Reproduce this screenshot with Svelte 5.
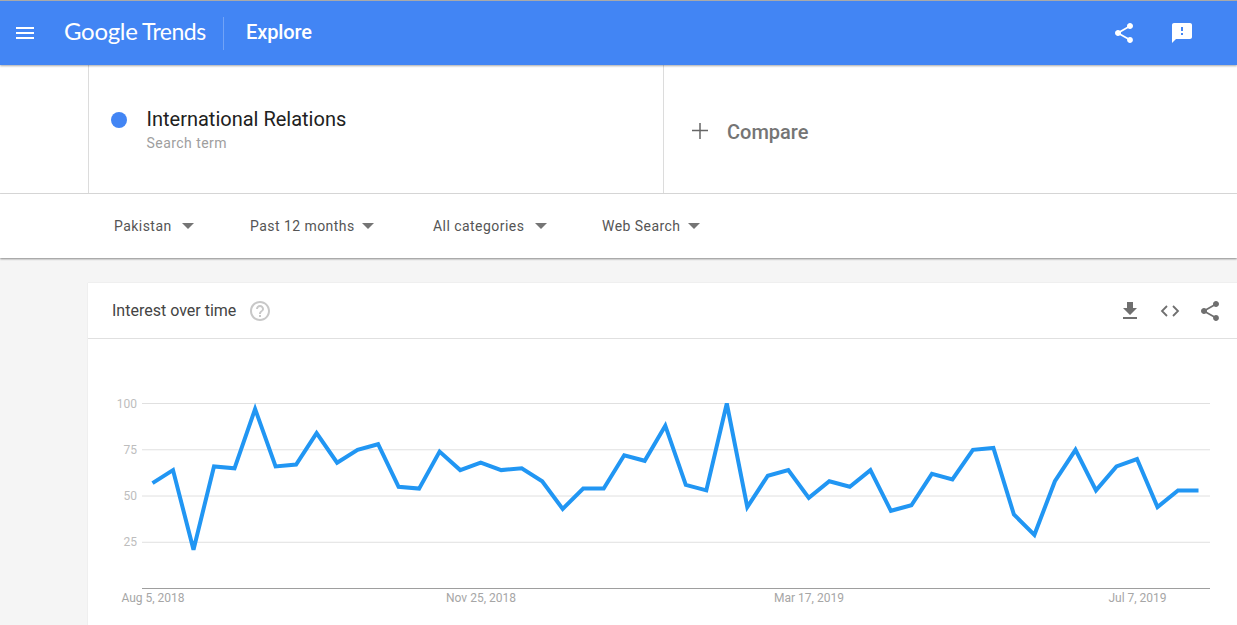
<script>
    const values = [57,64,21,66,65,97,66,67,84,68,75,78,55,54,74,64,68,64,65,58,43,54,54,72,69,88,56,53,100,44,61,64,49,58,55,64,42,45,62,59,75,76,40,29,58,75,53,66,70,44,53,53];
    const filters = [
        { label: "Pakistan", width: 136, gap: 10 },
        { label: "Past 12 months", width: 183, gap: 7 },
        { label: "All categories", width: 169, gap: 11 },
        { label: "Web Search", width: 110, gap: 8 }
    ];
    const ticks = [100, 75, 50, 25];
    const dates = [
        { label: "Aug 5, 2018", x: 65 },
        { label: "Nov 25, 2018", x: 393 },
        { label: "Mar 17, 2019", x: 721 },
        { label: "Jul 7, 2019", x: 1049.5 }
    ];
    const share = "M18 16.08c-.76 0-1.44.3-1.96.77L8.91 12.7c.05-.23.09-.46.09-.7s-.04-.47-.09-.7l7.05-4.11c.54.5 1.25.81 2.04.81 1.66 0 3-1.34 3-3s-1.34-3-3-3-3 1.34-3 3c0 .24.04.47.09.7L8.04 9.81C7.5 9.31 6.79 9 6 9c-1.66 0-3 1.34-3 3s1.34 3 3 3c.79 0 1.5-.31 2.04-.81l7.12 4.16c-.05.21-.08.43-.08.65 0 1.61 1.31 2.92 2.92 2.92 1.61 0 2.92-1.31 2.92-2.92s-1.31-2.92-2.92-2.92z";

    // chart coordinates are relative to the card's left edge and the top of the svg
    const xAt = (i) => 64.5 + i * 20.51;
    const yAt = (v) => 64.5 + (100 - v) * 1.85;
    const points = values.map((v, i) => `${xAt(i).toFixed(1)},${yAt(v).toFixed(1)}`).join(" ");
</script>

<div class="page">
    <header class="topbar">
        <svg class="menu" viewBox="0 0 24 24" width="24" height="24"><path d="M3 18h18v-2H3v2zm0-5h18v-2H3v2zm0-7v2h18V6H3z" /></svg>
        <div class="logo"><span class="google">Google</span> <span class="trends">Trends</span></div>
        <div class="explore">Explore</div>
        <div class="bar-actions">
            <svg viewBox="0 0 24 24" width="24" height="24"><path d={share} /></svg>
            <svg viewBox="0 0 24 24" width="24" height="24"><path d="M20 2H4c-1.1 0-1.99.9-1.99 2L2 22l4-4h14c1.1 0 2-.9 2-2V4c0-1.1-.9-2-2-2zm-7 12h-2v-2h2v2zm0-4h-2V6h2v4z" /></svg>
        </div>
    </header>

    <section class="terms">
        <div class="term">
            <span class="dot"></span>
            <div>
                <div class="term-name">International Relations</div>
                <div class="term-sub">Search term</div>
            </div>
        </div>
        <div class="compare">
            <svg viewBox="0 0 16 16" width="16" height="16"><path d="M0 7.5h16M8 0v16" /></svg>
            <span>Compare</span>
        </div>
    </section>

    <section class="filters">
        {#each filters as f}
            <div class="filter" style="width: {f.width}px; gap: {f.gap}px">
                <span>{f.label}</span>
                <i class="caret"></i>
            </div>
        {/each}
    </section>

    <main class="content">
        <div class="card">
            <div class="card-head">
                <span class="card-title">Interest over time</span>
                <svg class="help" viewBox="0 0 24 24" width="24" height="24"><path d="M11 18h2v-2h-2v2zm1-16C6.48 2 2 6.48 2 12s4.48 10 10 10 10-4.48 10-10S17.52 2 12 2zm0 18c-4.41 0-8-3.59-8-8s3.59-8 8-8 8 3.59 8 8-3.59 8-8 8zm0-14c-2.21 0-4 1.79-4 4h2c0-1.1.9-2 2-2s2 .9 2 2c0 2-3 1.75-3 5h2c0-2.25 3-2.5 3-5 0-2.21-1.79-4-4-4z" /></svg>
                <div class="card-actions">
                    <svg viewBox="0 0 24 24" width="24" height="24"><path d="M19 9h-4V3H9v6H5l7 7 7-7zM5 18v2h14v-2H5z" /></svg>
                    <svg viewBox="0 0 24 24" width="24" height="24"><path class="thin" d="M9 7l-5 5 5 5M15 7l5 5-5 5" /></svg>
                    <svg viewBox="0 0 24 24" width="24" height="24"><path d={share} /></svg>
                </div>
            </div>
            <svg class="chart" viewBox="0 0 1149 286" width="1149" height="286">
                {#each ticks as t}
                    <line class="grid" x1="54" x2="1122" y1={yAt(t)} y2={yAt(t)} />
                    <text class="tick" x="49" y={yAt(t) + 4} text-anchor="end">{t}</text>
                {/each}
                <line class="axis" x1="54" x2="1122" y1="249.5" y2="249.5" />
                {#each dates as d}
                    <text class="date" x={d.x} y="262.5" text-anchor="middle">{d.label}</text>
                {/each}
                <polyline class="series" {points} />
            </svg>
        </div>
    </main>
</div>

<style>
    :global(body) {
        margin: 0;
        overflow: hidden;
    }
    .page {
        height: 625px;
        display: flex;
        flex-direction: column;
        font-family: Roboto, "Liberation Sans", sans-serif;
        background: #f5f5f5;
        overflow: hidden;
    }
    .topbar {
        height: 64px;
        flex: none;
        border-top: 1px solid #a9a9a9;
        display: flex;
        align-items: center;
        background: #4285f4;
        color: #fff;
        box-shadow: 0 1px 2px rgba(0, 0, 0, 0.35);
        position: relative;
        z-index: 2;
    }
    .topbar svg {
        fill: #fff;
    }
    .menu {
        margin-left: 13px;
        flex: none;
    }
    .logo {
        margin-left: 27px;
        width: 159px;
        height: 33px;
        border-right: 1px solid rgba(255, 255, 255, 0.25);
        font-family: Lato, Roboto, sans-serif;
        font-size: 24px;
        line-height: 27px;
        white-space: nowrap;
        letter-spacing: -0.3px;
        word-spacing: -1.5px;
    }
    .trends {
        font-weight: 400;
        font-size: 23px;
        letter-spacing: -0.5px;
    }
    .explore {
        margin-left: 22px;
        margin-bottom: 2px;
        font-size: 20px;
        font-weight: 500;
        letter-spacing: -0.1px;
    }
    .bar-actions {
        margin-left: auto;
        margin-right: 43px;
        display: flex;
        gap: 34px;
    }
    .terms {
        height: 128px;
        flex: none;
        display: flex;
        background: #fff;
        border-bottom: 1px solid #dcdcdc;
        padding-left: 88px;
    }
    .term {
        width: 552px;
        display: flex;
        align-items: center;
        border-left: 1px solid #dcdcdc;
        border-right: 1px solid #dcdcdc;
        padding-left: 22px;
    }
    .dot {
        width: 16px;
        height: 16px;
        border-radius: 50%;
        background: #4285f4;
        margin-right: 19.5px;
        margin-bottom: 19px;
        flex: none;
    }
    .term-name {
        font-size: 20px;
        line-height: 26px;
        color: #212121;
    }
    .term-sub {
        font-size: 14px;
        line-height: 20px;
        letter-spacing: 0.45px;
        color: #9e9e9e;
        margin-top: 1px;
    }
    .compare {
        display: flex;
        align-items: center;
        padding-left: 28px;
        padding-top: 5px;
        color: #757575;
        font-size: 20px;
        font-weight: 500;
        gap: 19px;
    }
    .compare svg {
        fill: none;
        stroke: #666;
        stroke-width: 1.5;
        margin-top: -2px;
    }
    .filters {
        height: 64px;
        flex: none;
        display: flex;
        align-items: center;
        padding-left: 114px;
        background: #fff;
        box-shadow: 0 1px 2px rgba(0, 0, 0, 0.45);
        position: relative;
        z-index: 1;
        font-size: 14px;
        letter-spacing: 0.45px;
        color: #555;
    }
    .filter {
        display: flex;
        align-items: center;
        flex: none;
    }
    .filter span {
        flex: none;
    }
    .caret {
        width: 0;
        height: 0;
        border-left: 6px solid transparent;
        border-right: 6px solid transparent;
        border-top: 6px solid #757575;
    }
    .content {
        flex: 1;
        padding: 25px 0 0 88px;
        min-height: 0;
    }
    .card {
        background: #fff;
        height: 100%;
        box-shadow: 0 0 1px rgba(0, 0, 0, 0.15);
    }
    .card-head {
        height: 55px;
        display: flex;
        align-items: center;
        padding-left: 24px;
        border-bottom: 1px solid #e0e0e0;
    }
    .card-title {
        font-size: 16px;
        color: #444;
    }
    .help {
        margin-left: 12px;
        fill: #c8c8c8;
    }
    .card-actions {
        margin-left: auto;
        margin-right: 15px;
        display: flex;
        gap: 16px;
        fill: #6f6f6f;
    }
    .thin {
        fill: none;
        stroke: #6f6f6f;
        stroke-width: 1.8;
    }
    .chart {
        display: block;
    }
    .grid {
        stroke: #e0e0e0;
        stroke-width: 1;
    }
    .axis {
        stroke: #9e9e9e;
        stroke-width: 1;
    }
    .tick {
        font-size: 12px;
        fill: #bdbdbd;
    }
    .date {
        font-size: 12px;
        fill: #a6a6a6;
    }
    .series {
        fill: none;
        stroke: #2196f3;
        stroke-width: 4;
        stroke-linejoin: miter;
    }
</style>
